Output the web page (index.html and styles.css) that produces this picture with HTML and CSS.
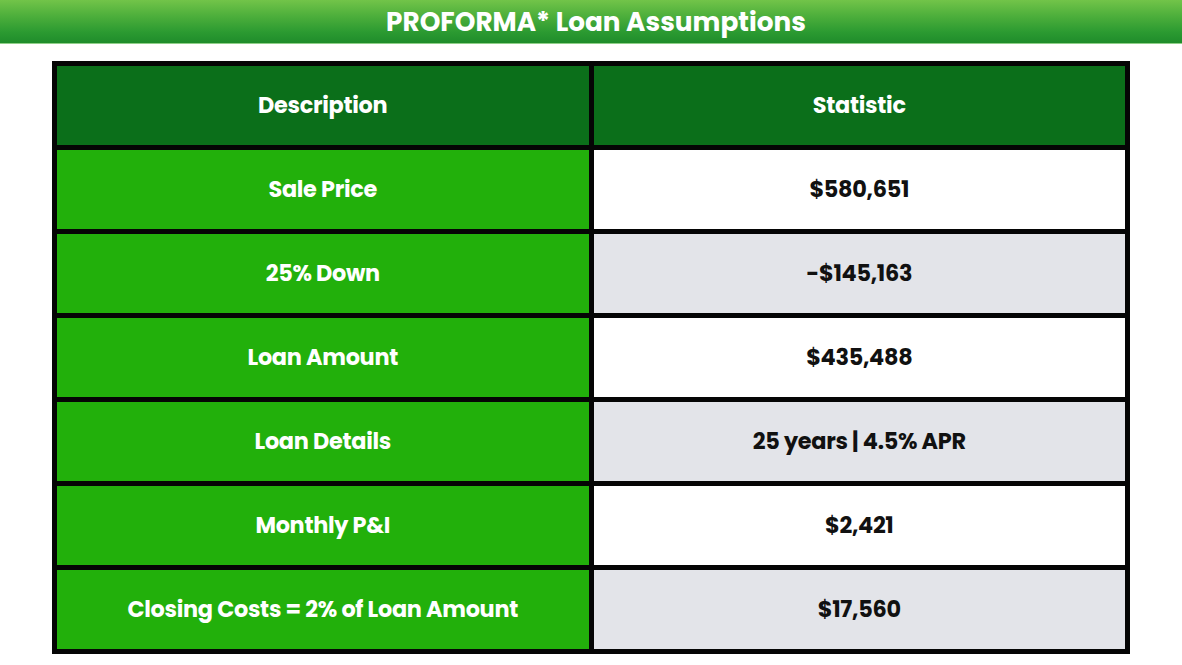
FILE: index.html
```html
<!DOCTYPE html>
<html lang="en">
<head>
<meta charset="utf-8">
<title>PROFORMA* Loan Assumptions</title>
<link rel="stylesheet" href="styles.css">
</head>
<body>
<header class="title-bar"><h1 class="title">PROFORMA* Loan Assumptions</h1></header>
<main class="content">
  <div class="grid">
    <div class="cell head">Description</div>
    <div class="cell head">Statistic</div>
    <div class="cell label">Sale Price</div>
    <div class="cell value white">$580,651</div>
    <div class="cell label">25% Down</div>
    <div class="cell value grey">-$145,163</div>
    <div class="cell label">Loan Amount</div>
    <div class="cell value white">$435,488</div>
    <div class="cell label">Loan Details</div>
    <div class="cell value grey">25 years | 4.5% APR</div>
    <div class="cell label">Monthly P&amp;I</div>
    <div class="cell value white">$2,421</div>
    <div class="cell label">Closing Costs = 2% of Loan Amount</div>
    <div class="cell value grey">$17,560</div>
  </div>
</main>
</body>
</html>
```

FILE: styles.css
```css
html, body {
  margin: 0;
  padding: 0;
  background: #ffffff;
}
body {
  font-family: "Poppins", Inter, "Open Sans", "Liberation Sans", sans-serif;
  width: 1182px;
  height: 665px;
  overflow: hidden;
}
.title-bar {
  height: 44px;
  background: linear-gradient(#72c449 0%, #4fb03c 35%, #2b9a31 75%, #1f8c2b 100%);
  border-bottom: 1px solid #8fcf88;
  box-sizing: border-box;
  display: flex;
  align-items: center;
  justify-content: center;
  padding-left: 10px;
}
.title {
  margin: 0;
  color: #ffffff;
  font-size: 26.3px;
  font-weight: 700;
  letter-spacing: 0;
  line-height: 1;
  padding-top: 1px;
}
.content {
  display: flex;
  justify-content: center;
  padding-top: 17px;
}
.grid {
  width: 1078px;
  box-sizing: border-box;
  display: grid;
  grid-template-columns: 1fr 1fr;
  grid-auto-rows: 79px;
  gap: 5px;
  padding: 5px;
  background: #050505;
}
.cell {
  display: flex;
  align-items: center;
  justify-content: center;
  font-size: 22.4px;
  font-weight: 700;
  letter-spacing: -0.3px;
  padding-bottom: 2px;
  box-sizing: border-box;
}
.head {
  background: #0b6f1a;
  color: #ffffff;
}
.label {
  background: #22b00b;
  color: #ffffff;
}
.value {
  color: #111111;
}
.white {
  background: #ffffff;
}
.grey {
  background: #e3e4e9;
}
```
